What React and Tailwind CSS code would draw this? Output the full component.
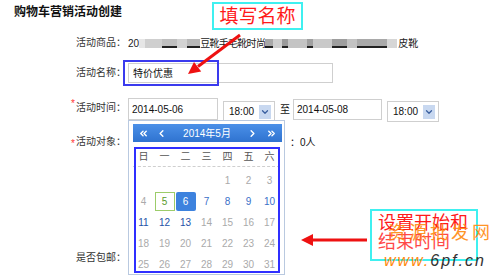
import React from "react";
import { ChevronsLeft, ChevronLeft, ChevronRight, ChevronsRight, ChevronDown } from "lucide-react";

// blurred parts of the product name: width, shade, dark underline
const blurA = [
  { w: 6, c: "#e6e6e6" },
  { w: 17, c: "#cfcfcf" },
  { w: 15, c: "#bfbfbf", u: true },
  { w: 10, c: "#d2d2d2" },
  { w: 13, c: "#b8b8b8", u: true },
];
const blurB = [
  { w: 8, c: "#a8a8a8", u: true },
  { w: 9, c: "#cfcfcf" },
  { w: 6, c: "#9a9a9a", u: true },
  { w: 19, c: "#c4c4c4" },
  { w: 6, c: "#a0a0a0", u: true },
  { w: 19, c: "#c9c9c9" },
  { w: 15, c: "#9e9e9e", u: true },
  { w: 10, c: "#c2c2c2" },
  { w: 30, c: "#a9a9a9", u: true },
  { w: 10, c: "#d6d6d6" },
];

const weekDays = ["日", "一", "二", "三", "四", "五", "六"];
const days = [
  [null, null, null, null, 1, 2, 3],
  [4, 5, 6, 7, 8, 9, 10],
  [11, 12, 13, 14, 15, 16, 17],
  [18, 19, 20, 21, 22, 23, 24],
  [25, 26, 27, 28, 29, 30, 31],
];

function Blur({ parts }) {
  return (
    <div className="flex h-[9px]">
      {parts.map((p, i) => (
        <div key={i} className="relative h-full" style={{ width: p.w, background: p.c }}>
          {p.u && <div className="absolute bottom-0 left-0 right-0 h-[2px] bg-[#222]" />}
        </div>
      ))}
    </div>
  );
}

function Label({ children, required }) {
  return (
    <div className="w-[126px] shrink-0 text-right text-[10px] leading-none text-[#333]">
      {required && <span className="relative top-[2px] mr-[1px] text-[#f33]">*</span>}
      {children}
    </div>
  );
}

function Select() {
  return (
    <div className="mt-[4px] flex h-[21px] w-[52px] items-center border border-[#cfcfcf] bg-white pl-[5px] text-[10px]">
      <span>18:00</span>
      <div className="ml-auto mr-[3px] flex h-[14px] w-[12px] items-center justify-center bg-[#c8d8f0]">
        <ChevronDown size={10} strokeWidth={3} className="text-[#3a5f9f]" />
      </div>
    </div>
  );
}

function dayColor(d) {
  if (d >= 7 && d <= 10) return "text-[#3a6fc8]";
  if (d >= 11 && d <= 13) return "text-[#2552a8]";
  return "text-[#aaaaaa]";
}

function Calendar() {
  return (
    <div className="absolute left-[128px] top-[120px] h-[155px] w-[157px] border border-[#b9c9e0] bg-white pl-[4px] pt-[3px]">
      <div className="flex h-[18px] w-[149px] items-center bg-gradient-to-b from-[#4b90e8] to-[#2f73d0] px-[5px] text-[10px] text-white">
        <ChevronsLeft size={11} strokeWidth={3} />
        <ChevronLeft size={11} strokeWidth={3} className="ml-[7px]" />
        <span className="flex-1 text-center">2014年5月</span>
        <ChevronRight size={11} strokeWidth={3} />
        <ChevronsRight size={11} strokeWidth={3} className="ml-[8px]" />
      </div>
      <div className="mt-[5px] grid h-[20px] w-[147px] grid-cols-7 items-center border-b border-dashed border-[#cfcfcf] text-[10px] text-[#555]">
        {weekDays.map((w) => (
          <div key={w} className="text-center">{w}</div>
        ))}
      </div>
      <div className="mt-[3px] w-[147px]">
        {days.map((row, r) => (
          <div key={r} className="grid h-[21px] grid-cols-7 items-center text-[10px]">
            {row.map((d, i) => (
              <div key={i} className="flex justify-center">
                {d === 5 ? (
                  <span className="flex h-[19px] w-[20px] items-center justify-center border border-[#9ccc6a] text-[#5a9a2a]">5</span>
                ) : d === 6 ? (
                  <span className="flex h-[19px] w-[20px] items-center justify-center rounded-[2px] bg-[#3d82de] text-white">6</span>
                ) : (
                  <span className={dayColor(d)}>{d}</span>
                )}
              </div>
            ))}
          </div>
        ))}
      </div>
    </div>
  );
}

export default function App() {
  return (
    <div
      className="relative h-[280px] w-[500px] overflow-hidden bg-white text-[#111]"
      style={{ fontFamily: '"Liberation Sans", "Noto Sans CJK SC", sans-serif' }}
    >
      <div className="h-[24px] pl-[14px] pt-[6px] text-[12px] font-bold leading-none">购物车营销活动创建</div>

      {/* 活动商品 */}
      <div className="mt-[9px] flex h-[20px] items-center">
        <Label>活动商品：</Label>
        <div className="ml-[2px] flex items-center text-[10px] text-[#222]">
          <span>20</span>
          <Blur parts={blurA} />
          <span className="tracking-[-0.7px]">豆靴手毛靴时尚</span>
          <Blur parts={blurB} />
          <span className="ml-[1px]">皮靴</span>
        </div>
      </div>

      {/* 活动名称 */}
      <div className="mt-[8px] flex h-[24px] items-center">
        <Label>活动名称：</Label>
        <div className="ml-[2px] flex h-[20px] w-[205px] items-center border border-[#cfcfcf] pl-[4px] text-[10px]">特价优惠</div>
      </div>

      {/* 活动时间 */}
      <div className="mt-[12px] flex h-[24px] items-start">
        <Label required>
          <span className="relative top-[6px]">活动时间：</span>
        </Label>
        <div className="ml-[2px] mt-[1px] flex h-[22px] w-[90px] items-center border border-[#cfcfcf] pl-[3px] text-[10px]">2014-05-06</div>
        <div className="ml-[5px]"><Select /></div>
        <span className="ml-[5px] mt-[5px] text-[10px]">至</span>
        <div className="ml-[3px] mt-[2px] flex h-[21px] w-[89px] items-center border border-[#cfcfcf] pl-[3px] text-[10px]">2014-05-08</div>
        <div className="ml-[5px]"><Select /></div>
      </div>

      {/* 活动对象 */}
      <div className="mt-[11px] flex h-[20px] items-center">
        <Label required>活动对象：</Label>
        <span className="ml-[164px] text-[10px]">：0人</span>
      </div>

      {/* 是否包邮 */}
      <div className="mt-[96px] flex h-[20px] items-center">
        <Label>是否包邮：</Label>
      </div>

      <Calendar />

      {/* annotations */}
      <div className="absolute left-[134px] top-[147px] h-[126px] w-[146px] border-2 border-[#2f2fff]" />
      <div className="absolute left-[123px] top-[60px] h-[26px] w-[96px] border-2 border-[#3a3aee]" />

      <div
        className="absolute left-[212px] top-[2px] flex h-[28px] w-[91px] items-center justify-center border-2 border-[#3ff0f0] bg-white text-[19px] leading-none text-[#ff1a1a]"
      >
        填写名称
      </div>

      <div className="absolute left-[370px] top-[209px] h-[52px] w-[108px] border-2 border-[#3ff0f0] bg-white pl-[6px] pt-[3px] text-[18px] leading-[19px] text-[#ff1a1a]">
        <div>设置开始和</div>
        <div className="opacity-80">结束时间</div>
      </div>

      {/* watermark */}
      <div className="absolute left-[388px] top-[224px] text-[18px] leading-none tracking-[3px] text-[#ff8a10] opacity-90">资源批发网</div>
      <div className="absolute left-[384px] top-[253px] text-[16px] italic leading-none tracking-[2px]">
        <span className="text-[#ff8a10]">www.</span>
        <span className="text-[#333]">6pf.cn</span>
      </div>

      <svg className="pointer-events-none absolute left-0 top-0" width="500" height="280">
        <line x1="240" y1="35" x2="198" y2="66.5" stroke="#ee1111" strokeWidth="3" />
        <polygon points="188,74 201.2,71.6 194,62" fill="#ee1111" />
        <line x1="367" y1="240" x2="311" y2="240" stroke="#ee1111" strokeWidth="3" />
        <polygon points="301,240 313,234 313,246" fill="#ee1111" />
      </svg>
    </div>
  );
}
